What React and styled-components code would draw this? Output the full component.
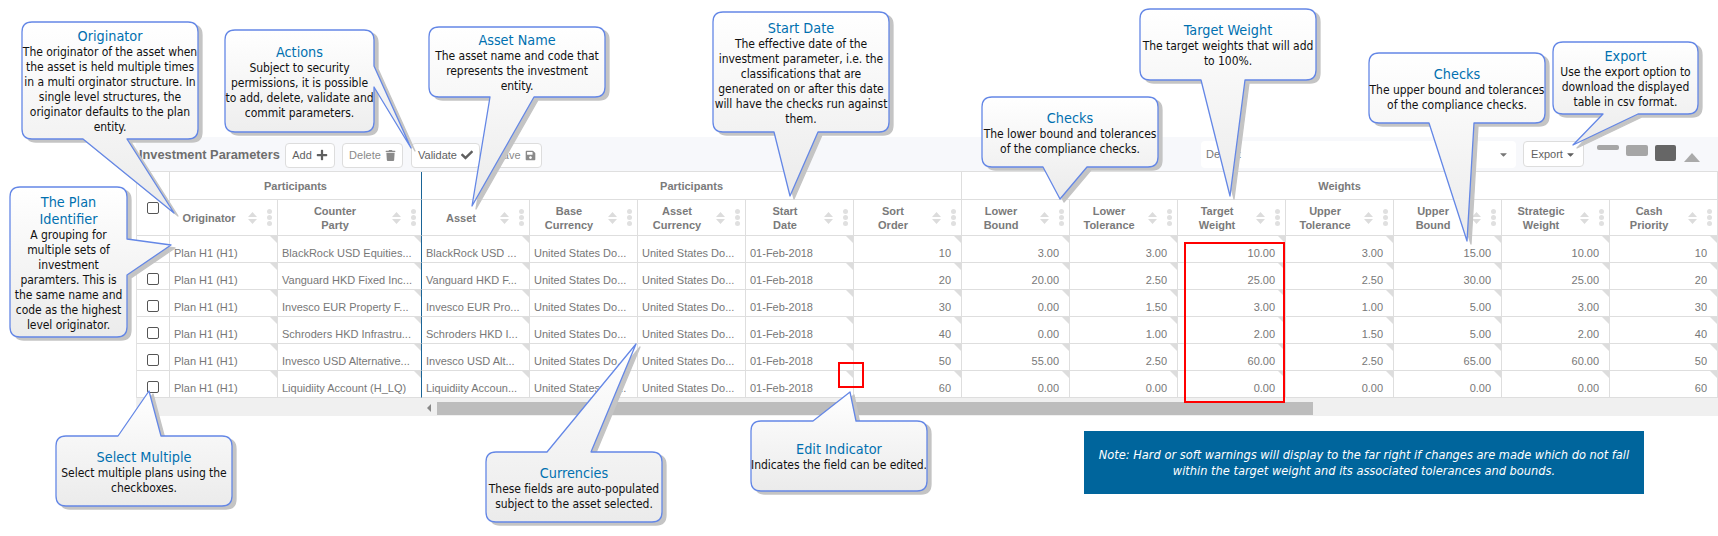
import styled, { createGlobalStyle } from 'styled-components'
import { FaPlus, FaTrash, FaCheck, FaSave, FaCaretDown } from 'react-icons/fa'

const GlobalStyle = createGlobalStyle`
  html, body {
    margin: 0;
    padding: 0;
    background: #fff;
  }
`

const groups = [
  { label: 'Participants', span: 2, divider: true },
  { label: 'Participants', span: 5 },
  { label: 'Weights', span: 7 },
]

const columns = [
  { title: ['Originator'], width: 108, edit: true },
  { title: ['Counter', 'Party'], width: 144, edit: true, divider: true },
  { title: ['Asset'], width: 108, edit: true },
  { title: ['Base', 'Currency'], width: 108 },
  { title: ['Asset', 'Currency'], width: 108 },
  { title: ['Start', 'Date'], width: 108, edit: true },
  { title: ['Sort', 'Order'], width: 108, edit: true, right: true },
  { title: ['Lower', 'Bound'], width: 108, edit: true, right: true },
  { title: ['Lower', 'Tolerance'], width: 108, edit: true, right: true },
  { title: ['Target', 'Weight'], width: 108, edit: true, right: true },
  { title: ['Upper', 'Tolerance'], width: 108, edit: true, right: true },
  { title: ['Upper', 'Bound'], width: 108, edit: true, right: true },
  { title: ['Strategic', 'Weight'], width: 108, edit: true, right: true },
  { title: ['Cash', 'Priority'], width: 108, edit: true, right: true },
]

const usd = 'United States Do...'
const date = '01-Feb-2018'
const plan = 'Plan H1 (H1)'

const rows = [
  [plan, 'BlackRock USD Equities...', 'BlackRock USD ...', usd, usd, date, '10', '3.00', '3.00', '10.00', '3.00', '15.00', '10.00', '10'],
  [plan, 'Vanguard HKD Fixed Inc...', 'Vanguard HKD F...', usd, usd, date, '20', '20.00', '2.50', '25.00', '2.50', '30.00', '25.00', '20'],
  [plan, 'Invesco EUR Property F...', 'Invesco EUR Pro...', usd, usd, date, '30', '0.00', '1.50', '3.00', '1.00', '5.00', '3.00', '30'],
  [plan, 'Schroders HKD Infrastru...', 'Schroders HKD I...', usd, usd, date, '40', '0.00', '1.00', '2.00', '1.50', '5.00', '2.00', '40'],
  [plan, 'Invesco USD Alternative...', 'Invesco USD Alt...', usd, usd, date, '50', '55.00', '2.50', '60.00', '2.50', '65.00', '60.00', '50'],
  [plan, 'Liquidiity Account (H_LQ)', 'Liquidiity Accoun...', usd, usd, date, '60', '0.00', '0.00', '0.00', '0.00', '0.00', '0.00', '60'],
]

// x, y, w, h are the body of the bubble; tail is in page coordinates too
const callouts = [
  {
    id: 'originator', x: 22, y: 22, w: 176, h: 117,
    tail: { side: 'bottom', a: 83, b: 127, tipX: 174, tipY: 213 },
    title: ['Originator'],
    lines: ['The originator of the asset when', 'the asset is held multiple times', 'in a multi orginator structure. In', 'single level structures, the', 'originator defaults to the plan', 'entity.'],
  },
  {
    id: 'actions', x: 225, y: 30, w: 149, h: 102,
    tail: { side: 'right', a: 66, b: 87, tipX: 411, tipY: 148 },
    title: ['Actions'],
    lines: ['Subject to security', 'permissions, it is possible', 'to add, delete, validate and', 'commit parameters.'],
  },
  {
    id: 'asset', x: 429, y: 27, w: 176, h: 70,
    tail: { side: 'bottom', a: 490, b: 534, tipX: 472, tipY: 206 },
    title: ['Asset Name'],
    lines: ['The asset name and code that', 'represents the investment', 'entity.'],
  },
  {
    id: 'plan', x: 10, y: 187, w: 117, h: 150,
    tail: { side: 'right', a: 239, b: 275, tipX: 171, tipY: 245 },
    title: ['The Plan', 'Identifier'],
    lines: ['A grouping for', 'multiple sets of', 'investment', 'paramters. This is', 'the same name and', 'code as the highest', 'level originator.'],
  },
  {
    id: 'select', x: 56, y: 436, w: 176, h: 70,
    tail: { side: 'top', a: 118, b: 161, tipX: 149, tipY: 391 },
    title: ['Select Multiple'],
    lines: ['Select multiple plans using the', 'checkboxes.'],
  },
  {
    id: 'currencies', x: 486, y: 452, w: 176, h: 70,
    tail: { side: 'top', a: 547, b: 591, tipX: 636, tipY: 344 },
    title: ['Currencies'],
    lines: ['These fields are auto-populated', 'subject to the asset selected.'],
  },
  {
    id: 'start', x: 713, y: 12, w: 176, h: 120,
    tail: { side: 'bottom', a: 774, b: 818, tipX: 790, tipY: 196 },
    title: ['Start Date'],
    lines: ['The effective date of the', 'investment parameter, i.e. the', 'classifications that are', 'generated on or after this date', 'will have the checks run against', 'them.'],
  },
  {
    id: 'lower', x: 982, y: 97, w: 176, h: 70,
    tail: { side: 'bottom', a: 1043, b: 1087, tipX: 1060, tipY: 199 },
    title: ['Checks'],
    lines: ['The lower bound and tolerances', 'of the compliance checks.'],
  },
  {
    id: 'target', x: 1140, y: 9, w: 176, h: 71,
    tail: { side: 'bottom', a: 1201, b: 1245, tipX: 1230, tipY: 196 },
    title: ['Target Weight'],
    lines: ['The target weights that will add', 'to 100%.'],
  },
  {
    id: 'upper', x: 1369, y: 53, w: 176, h: 70,
    tail: { side: 'bottom', a: 1429, b: 1474, tipX: 1467, tipY: 241 },
    title: ['Checks'],
    lines: ['The upper bound and tolerances', 'of the compliance checks.'],
  },
  {
    id: 'export', x: 1553, y: 42, w: 145, h: 72,
    tail: { side: 'bottom', a: 1603, b: 1638, tipX: 1573, tipY: 145 },
    title: ['Export'],
    lines: ['Use the export option to', 'download the displayed', 'table in csv format.'],
  },
  {
    id: 'edit', x: 751, y: 421, w: 176, h: 70,
    tail: { side: 'top', a: 813, b: 856, tipX: 850, tipY: 392 },
    title: ['Edit Indicator'],
    lines: ['Indicates the field can be edited.'],
  },
]

function bubblePath({ x, y, w, h, tail }) {
  const r = 10
  const tipX = tail.tipX - x
  const tipY = tail.tipY - y
  const offset = tail.side === 'right' ? y : x
  const a = tail.a - offset
  const b = tail.b - offset
  const top = tail.side === 'top' ? `L${a} 0 L${tipX} ${tipY} L${b} 0 ` : ''
  const right = tail.side === 'right' ? `L${w} ${a} L${tipX} ${tipY} L${w} ${b} ` : ''
  const bottom = tail.side === 'bottom' ? `L${b} ${h} L${tipX} ${tipY} L${a} ${h} ` : ''
  return `M${r} 0 ${top}L${w - r} 0 Q${w} 0 ${w} ${r} ${right}L${w} ${h - r} Q${w} ${h} ${w - r} ${h} ${bottom}L${r} ${h} Q0 ${h} 0 ${h - r} L0 ${r} Q0 0 ${r} 0 Z`
}

function Callout({ data }) {
  const gradient = `bubble-${data.id}`
  return (
    <Bubble $x={data.x} $y={data.y} $w={data.w} $h={data.h}>
      <BubbleShape width={data.w} height={data.h}>
        <defs>
          <linearGradient id={gradient} x1="0" y1="0" x2="0" y2="1">
            <stop offset="0" stopColor="#ffffff" />
            <stop offset="1" stopColor="#ebebeb" />
          </linearGradient>
        </defs>
        <path d={bubblePath(data)} fill={`url(#${gradient})`} stroke="#6487e6" strokeWidth="1.3" strokeLinejoin="round" />
      </BubbleShape>
      <BubbleText>
        {data.title.map((t) => <BubbleTitle key={t}>{t}</BubbleTitle>)}
        {data.lines.map((l) => <BubbleLine key={l}>{l}</BubbleLine>)}
      </BubbleText>
    </Bubble>
  )
}

function SortIcon() {
  return (
    <svg width="9" height="12" viewBox="0 0 9 12">
      <path d="M4.5 0 L9 5 L0 5 Z M4.5 12 L0 7 L9 7 Z" fill="#dcdcdc" />
    </svg>
  )
}

export default function App() {
  return (
    <Page>
      <GlobalStyle />
      <Toolbar>
        <ToolbarTitle>Investment Parameters</ToolbarTitle>
        <ToolButton $w={50} $gap={7}>Add <FaPlus size={12} /></ToolButton>
        <ToolButton $w={61} $gap={8} $disabled>Delete <FaTrash size={11} /></ToolButton>
        <ToolButton $w={69} $gap={9}>Validate <FaCheck size={12} /></ToolButton>
        <ToolButton $w={53} $gap={0} $disabled>Save <FaSave size={11} /></ToolButton>
        <ViewSelect>
          <span>Default</span>
          <FaCaretDown size={11} />
        </ViewSelect>
        <ExportButton $w={61} $gap={0}>Export <FaCaretDown size={11} /></ExportButton>
        <Density>
          <DensityBar $h={5} $w={22} $c="#a6a6a6" />
          <DensityBar $h={11} $w={22} $c="#a6a6a6" />
          <DensityBar $h={16} $w={21} $c="#666666" />
        </Density>
        <Collapse />
      </Toolbar>

      <Grid>
        <colgroup>
          <col width="33" />
          {columns.map((c, i) => <col key={i} width={c.width} />)}
        </colgroup>
        <thead>
          <GroupRow>
            <CheckHead rowSpan="2"><Check type="checkbox" /></CheckHead>
            {groups.map((g, i) => (
              <GroupCell key={i} colSpan={g.span} $divider={g.divider}>{g.label}</GroupCell>
            ))}
          </GroupRow>
          <HeadRow>
            {columns.map((c, i) => (
              <HeadCell key={i} $divider={c.divider}>
                <HeadInner>
                  <HeadLabel>{c.title.map((t) => <span key={t}>{t}</span>)}</HeadLabel>
                  <SortIcon />
                  <Grip><i /><i /><i /></Grip>
                </HeadInner>
              </HeadCell>
            ))}
          </HeadRow>
        </thead>
        <tbody>
          {rows.map((row, r) => (
            <BodyRow key={r}>
              <CheckCell><Check type="checkbox" /></CheckCell>
              {row.map((value, i) => (
                <Cell key={i} $right={columns[i].right} $edit={columns[i].edit} $divider={columns[i].divider}>{value}</Cell>
              ))}
            </BodyRow>
          ))}
        </tbody>
      </Grid>

      <ScrollTrack>
        <ScrollArrow />
        <ScrollThumb />
      </ScrollTrack>

      <Note>
        Note: Hard or soft warnings will display to the far right if changes are made which do not fall<br />
        within the target weight and its associated tolerances and bounds.
      </Note>

      <RedBox $x={838} $y={362} $w={26} $h={26} />
      <RedBox $x={1184} $y={242} $w={101} $h={161} />

      {callouts.map((c) => <Callout key={c.id} data={c} />)}
    </Page>
  )
}

const Page = styled.div`
  position: relative;
  width: 1718px;
  height: 536px;
  overflow: hidden;
  padding: 137px 0 0 136px;
  box-sizing: border-box;
  background: #fff;
  font-family: "Liberation Sans", Arial, sans-serif;
  font-size: 11px;
  color: #777;
`

const Toolbar = styled.div`
  display: flex;
  align-items: center;
  height: 35px;
  padding: 0 18px 0 3px;
  box-sizing: border-box;
  background: #f7f8fb;
  border-bottom: 1px solid #dfdfdf;
`

const ToolbarTitle = styled.div`
  font-size: 12.8px;
  font-weight: bold;
  color: #6e6e6e;
  width: 146px;
  white-space: nowrap;
`

const ToolButton = styled.div`
  display: flex;
  align-items: center;
  justify-content: center;
  gap: 4px;
  width: ${(p) => p.$w}px;
  height: 25px;
  margin: 2px ${(p) => p.$gap}px 0 0;
  box-sizing: border-box;
  background: #fff;
  border: 1px solid #ddd;
  border-radius: 4px;
  color: ${(p) => (p.$disabled ? '#8a8a8a' : '#5f5f5f')};
  white-space: nowrap;
`

const ViewSelect = styled.div`
  display: flex;
  align-items: center;
  justify-content: space-between;
  margin-left: auto;
  width: 315px;
  height: 27px;
  padding: 0 7px 0 5px;
  box-sizing: border-box;
  background: #fff;
  border-radius: 4px;
  color: #777;
`

const ExportButton = styled(ToolButton)`
  margin: 0 0 0 7px;
  height: 26px;
  gap: 2px;
`

const Density = styled.div`
  display: flex;
  align-items: flex-start;
  gap: 7px;
  margin: -2px 0 0 13px;
`

const DensityBar = styled.div`
  width: ${(p) => p.$w}px;
  height: ${(p) => p.$h}px;
  background: ${(p) => p.$c};
  border-radius: 2px;
`

const Collapse = styled.div`
  width: 0;
  height: 0;
  margin: 6px 0 0 8px;
  border-left: 8px solid transparent;
  border-right: 8px solid transparent;
  border-bottom: 9px solid #aaa;
`

const Grid = styled.table`
  width: 1582px;
  table-layout: fixed;
  border-collapse: separate;
  border-spacing: 0;
  border-left: 1px solid #e2e2e2;
  box-sizing: border-box;
`

const GroupRow = styled.tr`
  height: 28px;
`

const HeadRow = styled.tr`
  height: 36px;
`

const BodyRow = styled.tr`
  height: 27px;
`

const CheckHead = styled.th`
  padding: 8px 0 0;
  text-align: center;
  border-right: 1px solid #dedede;
  border-bottom: 1px solid #dedede;
`

const CheckCell = styled.td`
  padding: 5px 0 0;
  text-align: center;
  border-right: 1px solid #dedede;
  border-bottom: 1px solid #dedede;
`

const Check = styled.input`
  appearance: none;
  display: block;
  width: 12px;
  height: 12px;
  margin: 0 auto;
  background: #fff;
  border: 1px solid #555;
  border-radius: 2px;
`

const GroupCell = styled.th`
  padding: 0;
  font-size: 11px;
  font-weight: bold;
  color: #7a7a7a;
  text-align: center;
  border-right: 1px solid ${(p) => (p.$divider ? '#1a6496' : '#dedede')};
  border-bottom: 1px solid #dedede;
`

const HeadCell = styled.th`
  padding: 0;
  font-weight: bold;
  color: #7a7a7a;
  border-right: 1px solid ${(p) => (p.$divider ? '#1a6496' : '#dedede')};
  border-bottom: 1px solid #dedede;
`

const HeadInner = styled.div`
  display: flex;
  align-items: center;
  padding-right: 5px;
`

const HeadLabel = styled.div`
  flex: 1;
  display: flex;
  flex-direction: column;
  align-items: center;
  line-height: 14px;
`

const Grip = styled.div`
  display: flex;
  flex-direction: column;
  gap: 1px;
  margin-left: 10px;

  i {
    display: block;
    width: 5px;
    height: 5px;
    border-radius: 50%;
    background: #e0e0e0;
  }
`

const Cell = styled.td`
  position: relative;
  padding: 7px 10px 0 4px;
  box-sizing: border-box;
  white-space: nowrap;
  overflow: hidden;
  color: #777;
  text-align: ${(p) => (p.$right ? 'right' : 'left')};
  border-right: 1px solid ${(p) => (p.$divider ? '#1a6496' : '#dedede')};
  border-bottom: 1px solid #dedede;

  ${(p) => p.$edit && `
    &::after {
      content: '';
      position: absolute;
      top: 0;
      right: 0;
      border-top: 7px solid #ddd;
      border-left: 7px solid transparent;
    }
  `}
`

const ScrollTrack = styled.div`
  display: flex;
  align-items: center;
  height: 18px;
  padding: 2px 0 0 291px;
  box-sizing: border-box;
  background: #f0f0f0;
`

const ScrollArrow = styled.div`
  width: 0;
  height: 0;
  margin-right: 6px;
  border-top: 4px solid transparent;
  border-bottom: 4px solid transparent;
  border-right: 4px solid #888;
`

const ScrollThumb = styled.div`
  width: 876px;
  height: 13px;
  background: #bdbdbd;
`

const Note = styled.div`
  width: 560px;
  height: 63px;
  margin: 15px 0 0 948px;
  padding-top: 16px;
  box-sizing: border-box;
  background: #00659c;
  color: #fff;
  font-family: "DejaVu Sans Condensed", "DejaVu Sans", sans-serif;
  font-size: 12.7px;
  font-style: italic;
  line-height: 16px;
  text-align: center;
`

const RedBox = styled.div`
  position: absolute;
  left: ${(p) => p.$x}px;
  top: ${(p) => p.$y}px;
  width: ${(p) => p.$w}px;
  height: ${(p) => p.$h}px;
  box-sizing: border-box;
  border: 2px solid #f00;
`

const Bubble = styled.div`
  position: absolute;
  left: ${(p) => p.$x}px;
  top: ${(p) => p.$y}px;
  width: ${(p) => p.$w}px;
  height: ${(p) => p.$h}px;
  display: flex;
  align-items: center;
  justify-content: center;
`

const BubbleShape = styled.svg`
  position: absolute;
  inset: 0;
  overflow: visible;
  filter: drop-shadow(4px 3px 0.5px #c4c4c4);
`

const BubbleText = styled.div`
  position: relative;
  padding-top: 2px;
  text-align: center;
  font-family: "DejaVu Sans Condensed", "DejaVu Sans", sans-serif;
`

const BubbleTitle = styled.div`
  font-size: 14.3px;
  line-height: 17px;
  color: #0070b0;
  white-space: nowrap;
`

const BubbleLine = styled.div`
  font-size: 12px;
  line-height: 15px;
  letter-spacing: -0.05px;
  color: #111;
  white-space: nowrap;
`
